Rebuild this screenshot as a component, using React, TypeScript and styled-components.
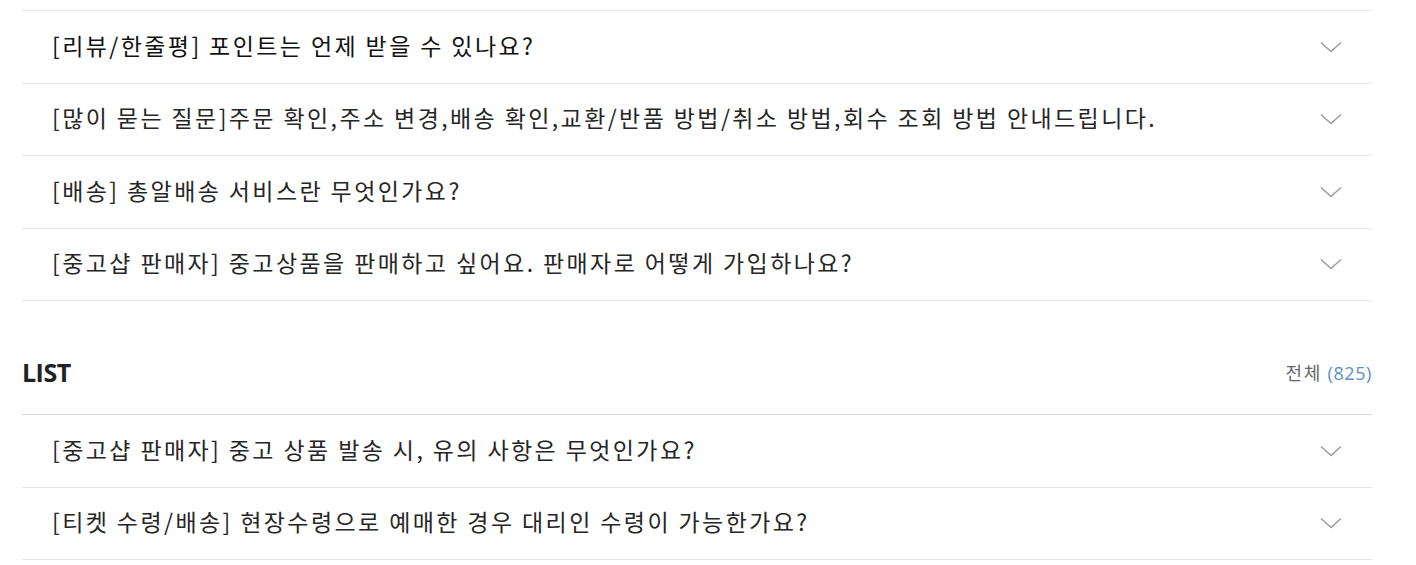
import styled, { createGlobalStyle } from "styled-components";

const GlobalStyle = createGlobalStyle`
  body {
    margin: 0;
    background: #fff;
    font-family: "Noto Sans CJK KR", "Noto Sans", sans-serif;
  }
`;

const Page = styled.div`
  padding: 10px 44px 0 22px;
`;

const FaqList = styled.ul<{ $topLine?: string }>`
  list-style: none;
  margin: 0;
  padding: 0;
  border-top: 1px solid ${(p) => p.$topLine || "#e9e9e9"};
`;

const Item = styled.li`
  display: flex;
  align-items: center;
  justify-content: space-between;
  box-sizing: border-box;
  height: 72.5px;
  padding: 0 30px 4px;
  border-bottom: 1px solid #e6e6e6;
  cursor: pointer;

  svg {
    margin-top: 4px;
  }
`;

const Question = styled.span<{ $dark?: boolean }>`
  font-size: 23px;
  color: ${(p) => (p.$dark ? "#111" : "#262626")};
  letter-spacing: 2.4px;
`;

const Header = styled.div`
  display: flex;
  align-items: center;
  justify-content: space-between;
  margin-top: 53px;
  height: 36px;
  padding-bottom: 24px;
`;

const Title = styled.h2`
  margin: 0;
  font-family: "Open Sans", "Noto Sans", sans-serif;
  font-size: 25px;
  font-weight: 700;
  color: #222;
  letter-spacing: -0.5px;
`;

const Total = styled.span`
  font-size: 18px;
  color: #666;
  letter-spacing: 1.6px;
`;

const Count = styled.span`
  color: #5b8fc2;
  font-family: "Open Sans", sans-serif;
  letter-spacing: 0.6px;
`;

const Chevron = () => (
  <svg width="22" height="12" viewBox="0 0 22 12" fill="none">
    <path d="M1 1.5 L11 10.5 L21 1.5" stroke="#9a9a9a" strokeWidth="1.4" />
  </svg>
);

const faqs = [
  "[리뷰/한줄평] 포인트는 언제 받을 수 있나요?",
  "[많이 묻는 질문]주문 확인,주소 변경,배송 확인,교환/반품 방법/취소 방법,회수 조회 방법 안내드립니다.",
  "[배송] 총알배송 서비스란 무엇인가요?",
  "[중고샵 판매자] 중고상품을 판매하고 싶어요. 판매자로 어떻게 가입하나요?",
];

const list = [
  "[중고샵 판매자] 중고 상품 발송 시, 유의 사항은 무엇인가요?",
  "[티켓 수령/배송] 현장수령으로 예매한 경우 대리인 수령이 가능한가요?",
];

function App() {
  return (
    <Page>
      <GlobalStyle />
      <FaqList>
        {faqs.map((q, i) => (
          <Item key={q}>
            <Question $dark={i === 0}>{q}</Question>
            <Chevron />
          </Item>
        ))}
      </FaqList>

      <Header>
        <Title>LIST</Title>
        <Total>
          전체 <Count>(825)</Count>
        </Total>
      </Header>
      <FaqList $topLine="#d8d8d8">
        {list.map((q) => (
          <Item key={q}>
            <Question>{q}</Question>
            <Chevron />
          </Item>
        ))}
      </FaqList>
    </Page>
  );
}

export default App;
